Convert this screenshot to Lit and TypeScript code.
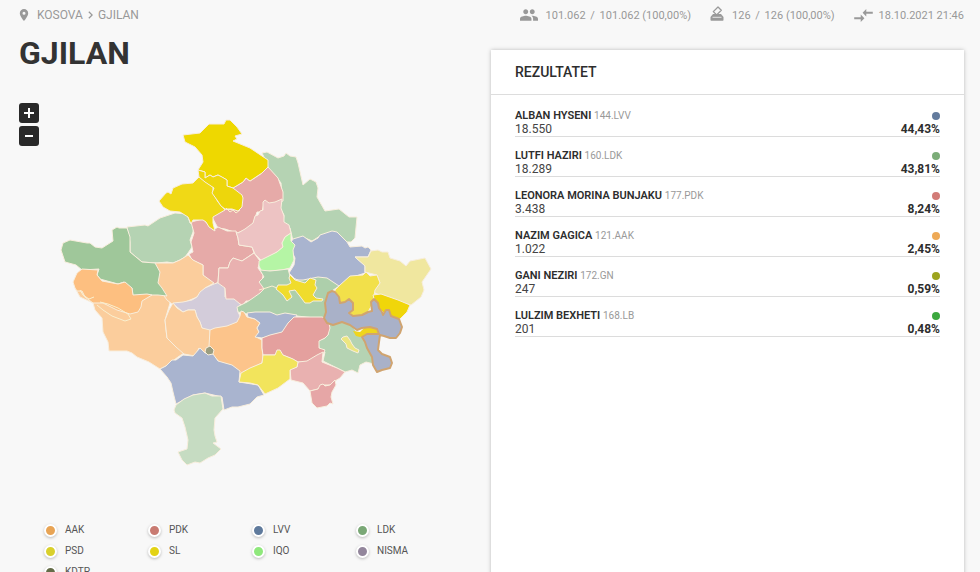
import { LitElement, html, css, svg } from "lit";
import { customElement, property } from "lit/decorators.js";
import { styleMap } from "lit/directives/style-map.js";

interface Candidate {
  name: string;
  code: string;
  votes: string;
  share: string;
  color: string;
}

const CANDIDATES: Candidate[] = [
  { name: "ALBAN HYSENI", code: "144.LVV", votes: "18.550", share: "44,43%", color: "#637b9d" },
  { name: "LUTFI HAZIRI", code: "160.LDK", votes: "18.289", share: "43,81%", color: "#7bac78" },
  { name: "LEONORA MORINA BUNJAKU", code: "177.PDK", votes: "3.438", share: "8,24%", color: "#d27b77" },
  { name: "NAZIM GAGICA", code: "121.AAK", votes: "1.022", share: "2,45%", color: "#eea956" },
  { name: "GANI NEZIRI", code: "172.GN", votes: "247", share: "0,59%", color: "#9da41e" },
  { name: "LULZIM BEXHETI", code: "168.LB", votes: "201", share: "0,48%", color: "#3ba83e" },
];

const PARTIES: [string, string][] = [
  ["AAK", "#e8a455"],
  ["PDK", "#c97b72"],
  ["LVV", "#5f7a9c"],
  ["LDK", "#7aa876"],
  ["PSD", "#d9d02c"],
  ["SL", "#e3d315"],
  ["IQO", "#8fe87c"],
  ["NISMA", "#93869c"],
  ["KDTP", "#646c48"],
];

// Municipality outlines: [fill, points], painted in order.
const AREAS: [string, string][] = [
  ["#b5d3b3", "262,153 267,152 278,158 284,156 286,153 290,156 296,157 298,163 303,185 310,179 316,182 318,188 317,197 325,211 339,209 349,217 357,217 355,238 351,242 347,242 337,234 332,232 320,236 312,241 303,237 293,241 290,228 283,223 284,215 280,208 282,197 281,183 275,175 268,168 267,163"],
  ["#e6aaa8", "233,188 243,182 246,178 250,181 262,173 268,167 278,178 283,192 283,201 275,204 264,203 262,212 257,212 253,224 245,230 237,233 225,229 218,228 212,217 224,209 238,210 242,206"],
  ["#eed800", "183,135 200,133 209,124 224,124 226,120 230,120 237,127 242,134 235,136 237,139 233,141 250,148 268,160 268,167 262,173 250,181 246,178 243,182 233,188 227,186 227,180 218,175 213,177 210,175 205,178 205,172 198,170 203,162 202,155 195,147 185,142"],
  ["#b5d3b3", "127,227 145,225 148,226 160,218 175,213 187,214 190,223 194,224 193,232 190,240 192,247 188,253 185,257 180,260 173,263 167,262 157,263 142,262 130,252 130,242"],
  ["#e6aaa8", "191,222 203,219 213,230 215,229 218,227 227,231 236,231 238,238 239,245 252,247 254,253 242,261 238,260 233,258 230,262 228,268 219,268 218,282 214,285 203,275 203,265 192,260 189,254 193,252 191,242 194,233"],
  ["#f0d916", "199,177 205,181 213,187 213,193 218,202 225,210 213,217 213,223 215,231 209,227 206,222 203,220 193,220 191,224 188,217 180,212 170,211 163,207 159,201 166,193 168,192 171,194 173,188 182,184 193,183"],
  ["#edd60c", "198,170 205,172 205,178 210,175 213,177 218,175 222,177 227,180 227,186 233,188 242,195 243,198 242,207 238,211 232,209 225,209 221,206 217,200 212,193 214,188 205,182 199,177"],
  ["#edc3c3", "238,233 245,229 253,223 255,216 258,215 260,211 263,210 263,202 265,200 269,203 275,202 282,199 281,208 284,216 284,222 289,225 291,233 285,237 282,243 283,247 277,252 262,261 255,254 252,247 239,245 238,238 236,232"],
  ["#fbcd9c", "75,288 80,297 93,303 95,310 102,318 103,332 108,342 109,351 127,351 132,353 137,357 149,362 160,369 166,366 178,357 184,353 182,347 172,342 167,338 166,330 165,320 170,303 167,296 152,291 100,290"],
  ["#fbcd9c", "155,263 173,263 180,260 188,255 193,260 203,265 203,275 214,283 205,288 197,297 183,303 172,304 167,300 156,285 156,275 158,270"],
  ["#9fc79a", "112,230 117,227 119,228 127,228 130,237 130,252 142,262 155,263 160,272 158,283 162,288 167,296 158,295 147,295 133,296 132,288 128,287 124,282 118,284 100,279 97,275 99,269 82,270 76,265 65,262 61,250 63,243 70,240 87,243 90,243 95,247 102,248 113,241"],
  ["#fdbf80", "77,273 82,269 98,270 97,275 102,281 118,284 125,282 132,288 133,295 147,294 152,295 142,301 141,307 138,312 130,314 117,310 103,303 93,303 85,297 82,291 77,291 75,288 73,282"],
  ["#d3ccda", "173,303 183,302 192,300 197,297 200,292 205,288 214,284 220,282 225,287 225,297 234,298 242,303 238,307 238,312 241,318 237,323 227,327 211,331 208,331 202,328 200,322 197,317 195,310 188,310 183,312 177,307"],
  ["#fbcd9c", "173,303 177,308 183,312 188,310 195,310 197,317 200,322 202,328 210,330 210,347 205,353 199,348 195,356 184,354 176,347 167,338 165,320 169,310"],
  ["#e9b1b0", "254,253 260,261 258,268 263,275 262,282 264,287 264,291 260,293 257,302 249,301 246,301 243,305 240,304 234,299 226,299 225,288 218,283 219,268 228,268 230,262 233,258 242,261"],
  ["#a9b4cf", "293,239 303,236 311,242 318,238 320,235 332,231 337,232 347,242 350,247 362,246 365,248 368,247 371,250 368,257 355,257 362,263 365,266 365,273 350,278 339,288 330,281 318,279 303,282 295,279 289,273 294,265 295,258 292,252 288,247"],
  ["#b5f5a5", "291,233 291,241 295,245 293,250 294,260 290,268 282,270 270,271 262,272 259,266 259,261 277,252 283,247 282,243 285,237"],
  ["#f0e79f", "371,251 378,250 382,252 388,252 390,258 400,261 406,266 410,261 425,258 431,269 422,282 424,290 421,297 411,305 397,301 382,296 373,292 380,283 377,275 365,272 365,266 355,257 368,257"],
  ["#adcfab", "237,307 247,302 253,298 260,293 264,289 262,286 259,282 264,277 260,270 270,271 280,270 288,269 290,276 297,280 303,280 318,277 327,278 339,286 329,293 330,300 327,303 329,310 325,319 315,318 297,316 285,315 277,316 270,313 255,313 247,314 238,312"],
  ["#f2e04a", "335,290 340,285 350,276 363,275 366,272 370,276 377,275 380,283 375,290 374,296 373,303 368,312 360,318 350,320 345,308 335,300"],
  ["#f0d60a", "373,295 381,294 398,300 410,305 407,312 400,319 390,318 385,314 376,305"],
  ["#f0dc2c", "290,275 295,280 305,283 310,278 316,280 315,285 317,288 313,295 316,298 323,299 322,301 313,301 310,303 305,303 299,295 295,290 289,291 292,297 287,301 283,295 276,289 278,285 287,285 291,283 289,278"],
  ["#fcc48b", "241,311 244,312 247,317 255,319 260,323 257,328 259,332 256,337 262,340 262,348 263,357 262,363 250,369 241,374 232,366 220,363 212,354 209,346 210,330 215,328 227,326 237,322 240,316"],
  ["#a9b4cf", "247,313 255,312 270,312 277,315 285,313 297,315 294,320 288,325 282,333 270,336 262,338 255,337 259,332 257,328 260,323 255,319 248,317"],
  ["#b5d3b3", "329,323 342,321 352,325 357,333 363,336 368,345 372,357 374,364 366,362 360,365 358,373 352,370 345,372 335,367 323,361 325,352 319,348 318,341 325,338 328,335"],
  ["#e4a09e", "294,317 313,317 322,317 328,319 330,328 328,335 325,338 319,341 319,348 325,350 322,356 314,358 307,362 298,362 290,358 280,354 275,355 263,355 262,348 262,338 270,335 282,332 288,323"],
  ["#ece680", "343,337 347,336 350,340 352,344 355,348 359,350 358,353 353,351 347,348 346,344 341,339"],
  ["#e9b1b0", "290,369 297,367 298,362 307,361 317,355 323,352 322,362 332,366 337,368 345,372 340,378 335,381 330,385 323,385 318,389 310,391 303,383 291,380"],
  ["#e6a6a6", "310,391 318,389 320,385 323,384 325,386 330,385 335,380 336,385 332,392 331,397 333,404 330,403 327,406 317,408 312,403"],
  ["#a9b4cf", "160,369 166,366 172,360 176,360 183,355 193,356 200,348 205,353 213,354 218,361 232,365 240,371 239,382 258,385 264,395 257,397 250,404 238,407 232,407 224,410 222,397 205,393 193,395 176,404 173,392 171,383 167,377"],
  ["#f2e45c", "263,355 275,355 277,350 280,350 283,355 293,359 298,362 297,367 290,370 290,379 278,388 265,394 258,385 250,383 239,382 241,373 250,368 262,363"],
  ["#c6dcc2", "174,410 176,405 184,399 193,395 205,393 212,396 221,396 223,409 215,418 214,430 215,436 217,442 213,443 221,449 215,455 208,458 200,463 195,462 187,465 182,460 178,452 187,449 188,440 185,427 182,418 175,413"],
  ["#9a9d80", "206,348 210,346 214,350 213,354 208,355 205,352"],
];

const SEAMS = [
  "226,208 230,212 233,210 236,213 240,210",
  "259,290 266,288 272,286 277,288",
  "100,302 108,304 118,308 128,314 131,319 125,321 112,316 103,310 97,305",
  "80,290 83,295 89,299 94,297",
];

const SELECTED = [
  "328,293 332,291 335,292 339,297 340,303 345,302 349,299 353,303 353,310 349,313 353,316 362,315 368,312 372,311 371,302 374,299 378,303 379,308 382,312 383,315 386,310 389,310 391,316 399,319 402,327 400,333 396,338 390,338 384,336 380,335 379,342 378,350 382,354 390,357 392,363 390,368 382,370 377,372 373,365 372,357 367,348 365,342 362,337 367,334 379,334 377,329 370,327 362,328 357,330 350,325 342,322 333,325 327,323 324,318 326,312 325,303",
];

@customElement("municipality-map")
class MunicipalityMap extends LitElement {
  static styles = css`
    :host { display: block; position: relative; }
    svg { display: block; width: 100%; height: auto; }
    .area { stroke: #f8eedd; stroke-width: 1; stroke-linejoin: round; }
    .seam { fill: none; stroke: #faf0cf; stroke-width: 1; }
    .selected { fill: #a9b1c8; stroke: #d0a470; stroke-width: 2; stroke-linejoin: round; }
    .enclave { fill: #efd51c; }
    .zoom { position: absolute; top: 0; left: 0; display: grid; gap: 3px; }
    button {
      width: 20px; height: 20px; padding: 0; border: 0; border-radius: 3px;
      background: #292929; display: grid; place-items: center; cursor: pointer;
    }
    button svg { width: 10px; height: 10px; }
  `;

  render() {
    return html`
      <svg viewBox="19 103 452 417" role="img" aria-label="Kosova">
        ${AREAS.map(([fill, points]) => svg`<polygon class="area" fill=${fill} points=${points}></polygon>`)}
        ${SEAMS.map((points) => svg`<polyline class="seam" points=${points}></polyline>`)}
        <polygon class="enclave" points="353,331 360,332 365,327 376,327 380,335 370,334 360,337 356,336"></polygon>
        ${SELECTED.map((points) => svg`<polygon class="selected" points=${points}></polygon>`)}
      </svg>
      <div class="zoom">
        <button aria-label="Zoom in">
          <svg viewBox="0 0 10 10"><path d="M5 0v10M0 5h10" stroke="#fff" stroke-width="2"></path></svg>
        </button>
        <button aria-label="Zoom out">
          <svg viewBox="0 0 10 10"><path d="M1 5h8" stroke="#fff" stroke-width="2"></path></svg>
        </button>
      </div>
    `;
  }
}

@customElement("result-row")
class ResultRow extends LitElement {
  @property({ attribute: false }) candidate!: Candidate;

  static styles = css`
    :host { display: block; border-bottom: 1px solid #dcdcdc; margin-bottom: 11px; }
    .line { display: flex; justify-content: space-between; align-items: center; font-size: 12px; line-height: 13px; }
    .heading { font-size: 11px; line-height: 15px; }
    .name { font-weight: 600; color: #2d2d2d; }
    .code { font-size: 10px; color: #999; }
    .dot { width: 8px; height: 8px; border-radius: 50%; }
    .votes { color: #444; }
    .share { font-weight: 700; color: #2d2d2d; }
  `;

  render() {
    const c = this.candidate;
    return html`
      <div class="line heading">
        <span><span class="name">${c.name}</span> <span class="code">${c.code}</span></span>
        <span class="dot" style=${styleMap({ background: c.color })}></span>
      </div>
      <div class="line"><span class="votes">${c.votes}</span><span class="share">${c.share}</span></div>
    `;
  }
}

@customElement("app-root")
class AppRoot extends LitElement {
  static styles = css`
    :host {
      display: flex; flex-direction: column; box-sizing: border-box;
      min-height: 100vh; padding: 0 16px 0 19px;
      background: #f8f8f8; font-family: Roboto, sans-serif;
    }
    header {
      display: flex; justify-content: space-between; align-items: center;
      height: 30px; font-size: 11px; color: #999;
    }
    nav, .stats, .stat { display: flex; align-items: center; }
    nav a { color: inherit; text-decoration: none; font-size: 12px; }
    nav .pin { margin-right: 8px; }
    nav .sep { margin: 0 5px; }
    .stats { gap: 19px; }
    .stat { gap: 8px; }
    .stat.time { gap: 6px; }
    .slash { margin: 0 2px; }
    .stat svg, nav svg { display: block; fill: #999; }
    .stat .ballot { margin-bottom: 4px; }
    main { flex: 1; display: grid; grid-template-columns: minmax(0, 452fr) minmax(0, 473fr); gap: 20px; }
    h1 { margin: 4px 0 31px; font-size: 32px; line-height: 38px; font-weight: 700; color: #333; }
    .legend {
      display: grid; grid-template-columns: repeat(4, 1fr); row-gap: 1px;
      list-style: none; margin: 0; padding: 0 11px 0 25px;
      font-size: 10px; line-height: 20px; color: #555;
    }
    .legend li { display: flex; align-items: center; gap: 8px; }
    .mark {
      box-sizing: border-box; width: 13px; height: 13px; border: 2px solid #fff;
      border-radius: 50%; box-shadow: 0 1px 3px rgba(0, 0, 0, 0.25);
    }
    .card { margin-top: 20px; background: #fff; box-shadow: 0 0 4px rgba(0, 0, 0, 0.25); }
    h2 {
      margin: 0; padding: 0 24px; border-bottom: 1px solid #ddd;
      font-size: 14px; line-height: 44px; font-weight: 500; color: #2d2d2d;
    }
    .rows { padding: 13px 24px 0; }
  `;

  render() {
    return html`
      <header>
        <nav aria-label="Breadcrumb">
          <svg class="pin" width="10" height="12" viewBox="5 2 14 20"><path d="M12 2C8.13 2 5 5.13 5 9c0 5.25 7 13 7 13s7-7.75 7-13c0-3.87-3.13-7-7-7zm0 9.500a2.500 2.500 0 1 1 0-5 2.500 2.500 0 0 1 0 5z"></path></svg>
          <a href="#kosova">KOSOVA</a>
          <svg class="sep" width="5" height="8" viewBox="8 6 8 12"><path d="M10 6 8.590 7.410 13.170 12l-4.580 4.590L10 18l6-6z"></path></svg>
          <a href="#gjilan">GJILAN</a>
        </nav>
        <div class="stats">
          <div class="stat">
            <svg width="18" height="12" viewBox="1 5 22 14"><path d="M16 11c1.660 0 2.990-1.340 2.990-3S17.660 5 16 5s-3 1.340-3 3 1.340 3 3 3zm-8 0c1.660 0 2.990-1.340 2.990-3S9.660 5 8 5 5 6.340 5 8s1.340 3 3 3zm0 2c-2.330 0-7 1.170-7 3.500V19h14v-2.500C15 14.170 10.330 13 8 13zm8 0c-.29 0-.62.020-.97.050 1.160.84 1.970 1.970 1.970 3.450V19h6v-2.500c0-2.330-4.670-3.500-7-3.500z"></path></svg>
            <span>101.062 <span class="slash">/</span> 101.062 (100,00%)</span>
          </div>
          <div class="stat">
            <svg class="ballot" width="14" height="15" viewBox="0 0 14 15">
              <path d="M3 8h8l2.500 3v3a.8.8 0 0 1-.8.8H1.300a.8.8 0 0 1-.8-.8v-3z"></path>
              <path d="M2.500 11.300h9" stroke="#f8f8f8" stroke-width=".8"></path>
              <path d="M8 1l3.300 3.300-4.600 4.600L3.300 5.600z" fill="#f8f8f8" stroke="#999" stroke-width="1.300" stroke-linejoin="round"></path>
            </svg>
            <span>126 <span class="slash">/</span> 126 (100,00%)</span>
          </div>
          <div class="stat time">
            <svg width="19" height="13" viewBox="2 5 20 14"><path d="M9.010 14H2v2h7.010v3L13 15l-3.990-4v3zm5.980-1v-3H22V8h-7.010V5L11 9l3.990 4z"></path></svg>
            <span>18.10.2021 21:46</span>
          </div>
        </div>
      </header>
      <main>
        <section>
          <h1>GJILAN</h1>
          <municipality-map></municipality-map>
          <ul class="legend">
            ${PARTIES.map(([name, color]) => html`<li><span class="mark" style=${styleMap({ backgroundColor: color })}></span>${name}</li>`)}
          </ul>
        </section>
        <section class="card">
          <h2>REZULTATET</h2>
          <div class="rows">
            ${CANDIDATES.map((c) => html`<result-row .candidate=${c}></result-row>`)}
          </div>
        </section>
      </main>
    `;
  }
}
